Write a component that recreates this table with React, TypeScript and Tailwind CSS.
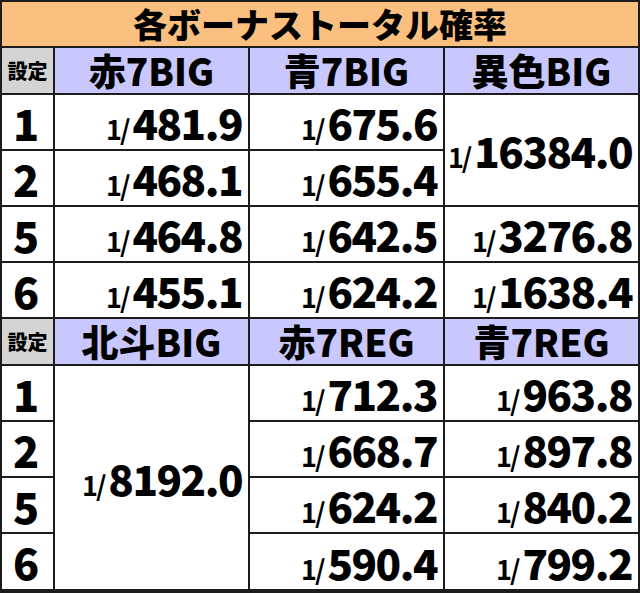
import React from "react";

const cellBase = "flex items-center bg-white text-black";

function Val({ v, className = "" }: { v: string; className?: string }) {
  return (
    <div className={`${cellBase} justify-end pr-[6px] ${className}`}>
      <span className="flex items-baseline leading-none">
        <span className="mr-[4px] text-[27px] tracking-[-2px]">1/</span>
        <span className="text-[42px] font-black tracking-[-1.5px]">{v}</span>
      </span>
    </div>
  );
}

function Head({ label }: { label: string }) {
  return (
    <div className="flex items-center justify-center bg-[#c8c8ff] text-[37px] font-black leading-none">
      {label}
    </div>
  );
}

function Setting() {
  return (
    <div className="flex items-center justify-center bg-[#d4d4d4] text-[20px] font-black leading-none">
      設定
    </div>
  );
}

function Num({ n }: { n: string }) {
  return (
    <div className={`${cellBase} justify-center pr-[3px] text-[43px] font-black leading-none`}>
      {n}
    </div>
  );
}

export default function App() {
  return (
    <div className="h-[593px] w-[640px] bg-white font-['Noto_Sans_CJK_JP',sans-serif] font-bold text-black">
      <div className="grid h-full w-full grid-cols-[51px_193px_193px_193px] grid-rows-[44px_45px_54px_54px_54px_54px_45px_54px_54px_54px_55px] gap-[2px] bg-[#1c1c1c] p-[2px]">
        {/* title */}
        <div className="col-span-4 flex items-center justify-center bg-[#fbc07f] text-[34px] font-black leading-none">
          各ボーナストータル確率
        </div>

        {/* upper block */}
        <Setting />
        <Head label="赤7BIG" />
        <Head label="青7BIG" />
        <Head label="異色BIG" />

        <Num n="1" />
        <Val v="481.9" />
        <Val v="675.6" />
        <Val v="16384.0" className="row-span-2" />

        <Num n="2" />
        <Val v="468.1" />
        <Val v="655.4" />

        <Num n="5" />
        <Val v="464.8" />
        <Val v="642.5" />
        <Val v="3276.8" />

        <Num n="6" />
        <Val v="455.1" />
        <Val v="624.2" />
        <Val v="1638.4" />

        {/* lower block */}
        <Setting />
        <Head label="北斗BIG" />
        <Head label="赤7REG" />
        <Head label="青7REG" />

        <Num n="1" />
        <Val v="8192.0" className="row-span-4" />
        <Val v="712.3" />
        <Val v="963.8" />

        <Num n="2" />
        <Val v="668.7" />
        <Val v="897.8" />

        <Num n="5" />
        <Val v="624.2" />
        <Val v="840.2" />

        <Num n="6" />
        <Val v="590.4" />
        <Val v="799.2" />
      </div>
    </div>
  );
}
